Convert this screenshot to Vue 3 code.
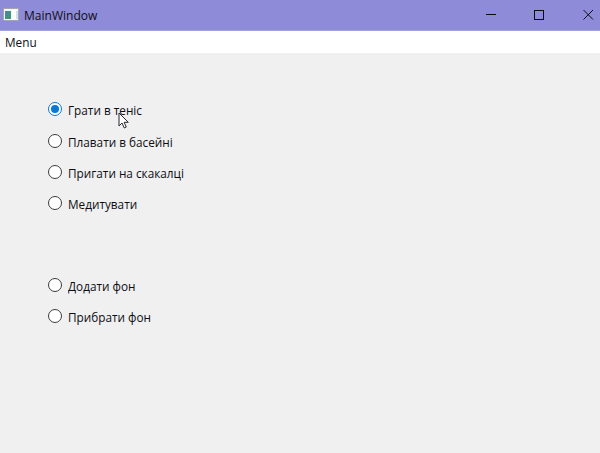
<script setup>
import { ref } from 'vue'

const selected = ref('tennis')
const activities = [
  { id: 'tennis', label: 'Грати в теніс' },
  { id: 'swim', label: 'Плавати в басейні' },
  { id: 'rope', label: 'Пригати на скакалці' },
  { id: 'meditate', label: 'Медитувати' },
]
const backgrounds = [
  { id: 'add', label: 'Додати фон' },
  { id: 'remove', label: 'Прибрати фон' },
]
</script>

<template>
  <div class="window">
    <header class="titlebar">
      <svg class="app-icon" width="16" height="13" viewBox="0 0 16 13">
        <rect x="0.5" y="0.5" width="15" height="12" fill="#f4f6f8" stroke="#a3a5b0" />
        <rect x="2" y="3" width="6" height="8" fill="#43937f" />
        <path d="M2 3h3v5H2z" fill="#4b86a0" />
        <rect x="9" y="2" width="4" height="9" fill="#ffffff" />
        <rect x="13" y="3" width="2" height="8" fill="#cfe3ea" />
      </svg>
      <span class="title">MainWindow</span>
      <svg class="controls" width="110" height="12" viewBox="0 0 110 12" fill="none" stroke="#0c0c14">
        <path d="M0 5.5h10" />
        <rect x="48.5" y="1.5" width="9" height="9" />
        <path d="M97.5 1l9.5 9.5M107 1l-9.5 9.5" />
      </svg>
    </header>
    <nav class="menubar"><span class="menu-item">Menu</span></nav>
    <main class="content">
      <div class="group activities">
        <label v-for="item in activities" :key="item.id" class="option" @click="selected = item.id">
          <span class="radio" :class="{ checked: selected === item.id }"></span>
          <span class="text">{{ item.label }}</span>
        </label>
      </div>
      <div class="group backgrounds">
        <label v-for="item in backgrounds" :key="item.id" class="option" @click="selected = item.id">
          <span class="radio" :class="{ checked: selected === item.id }"></span>
          <span class="text">{{ item.label }}</span>
        </label>
      </div>
      <svg class="cursor" width="12" height="18" viewBox="0 0 12 18">
        <path d="M1 1v13l3-3 2.3 5 2-1-2.2-4.7H10.3z" fill="#fff" stroke="#26262c" stroke-width="1" />
      </svg>
    </main>
  </div>
</template>

<style>
body { margin: 0; overflow: hidden; }
</style>

<style scoped>
.window {
  position: relative;
  display: flex;
  flex-direction: column;
  width: 600px;
  height: 453px;
  background: #f0f0f1;
  color: #0e0e12;
  font: 13px/20px "Open Sans", "Noto Sans", sans-serif;
  white-space: nowrap;
}
.titlebar {
  display: flex;
  align-items: center;
  box-sizing: border-box;
  height: 31px;
  padding: 0 0 1px 3px;
  background: #8e8bd8;
  border-bottom: 1px solid #a5a3df;
}
.title, .menu-item, .text {
  display: inline-block;
  transform: scaleX(0.905);
  transform-origin: left center;
}
.title { margin-left: 5px; transform: scaleX(0.925); }
.controls { margin-left: auto; margin-right: 4px; }
.menubar {
  box-sizing: border-box;
  height: 22px;
  padding-left: 4px;
  background: #fff;
  line-height: 22px;
}
.content {
  display: flex;
  flex-direction: column;
  flex: 1;
  padding: 46px 0 0 48px;
}
.group { display: grid; }
.activities { grid-template-rows: 32px 31px 31px 31px; }
.backgrounds { grid-template-rows: 31px 31px; margin-top: 51px; }
.option { display: flex; align-items: flex-start; height: 20px; }
.radio {
  display: flex;
  align-items: center;
  justify-content: center;
  box-sizing: border-box;
  width: 14px;
  height: 14px;
  margin-top: 3px;
  border: 1px solid #3c3c40;
  border-radius: 50%;
  background: #fff;
}
.radio.checked { border-color: #0a78d6; }
.radio.checked::after {
  content: "";
  width: 8px;
  height: 8px;
  border-radius: 50%;
  background: #0a78d6;
}
.text { margin-left: 5.5px; padding-top: 1px; }
.menu-item { margin-left: 0.5px; }
.cursor { position: absolute; left: 118px; top: 112px; }
</style>
